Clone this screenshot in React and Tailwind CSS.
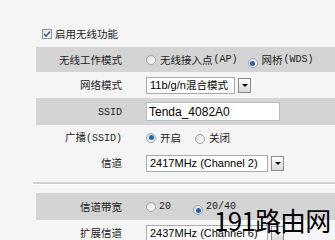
import React from "react"

const cjk = { fontFamily: '"Noto Sans CJK SC", "Liberation Sans", sans-serif' }
const latin = { fontFamily: '"Liberation Sans", Arial, sans-serif' }
const mono = { fontFamily: '"Liberation Mono", "Noto Sans CJK SC", monospace' }

// small XP-style radio button
const Radio = ({ checked }) => (
  <span className="inline-flex items-center justify-center w-[10px] h-[10px] rounded-full border border-[#9aa3ad] bg-gradient-to-br from-[#dcdcdc] to-white shrink-0">
    {checked && <span className="w-[5px] h-[5px] rounded-full bg-[#2a5fb0]" />}
  </span>
)

const Arrow = () => (
  <div className="w-[13px] h-[15px] border border-[#8a8a8a] bg-gradient-to-b from-white to-[#d8d8d8] flex items-center justify-center">
    <span className="w-0 h-0 border-l-[3px] border-r-[3px] border-t-[3px] border-l-transparent border-r-transparent border-t-black" />
  </div>
)

const Select = ({ value, width }) => (
  <div className="flex items-center gap-[3px]">
    <div
      className={`h-[17px] border border-[#a5acb5] bg-white flex items-center px-[3px] text-[11px] text-black whitespace-nowrap ${width}`}
      style={latin}
    >
      {value}
    </div>
    <Arrow />
  </div>
)

const Row = ({ label, gray, h = "h-[26px]", children }) => (
  <div className={`flex items-center ${h} ${gray ? "bg-[#d4d4d4]" : ""}`}>
    <div className="w-[86px] text-right text-[10.5px] text-[#222] whitespace-nowrap" style={cjk}>
      {label}
    </div>
    <div className="pl-[24px] flex items-center whitespace-nowrap">{children}</div>
  </div>
)

export default function App() {
  return (
    <div className="relative w-[335px] h-[240px] overflow-hidden bg-[#f5f5f5]">
      <div className="pl-[36px]">
        <div className="h-[47px] flex items-end pb-[7px] pl-[6px] gap-[3px]">
          <span className="mb-[1px] w-[10px] h-[10px] border border-[#8a95a3] bg-gradient-to-br from-[#e2e2e2] to-white flex items-center justify-center">
            <svg width="8" height="8" viewBox="0 0 8 8">
              <path d="M1 4 L3 6.2 L7 1.5" fill="none" stroke="#2a4fa0" strokeWidth="1.4" />
            </svg>
          </span>
          <span className="text-[10.5px] leading-[13px] text-[#222]" style={cjk}>启用无线功能</span>
        </div>

        <Row label="无线工作模式" gray h="h-[25px]">
          <Radio />
          <span className="ml-[4px] text-[10.5px] text-[#222]" style={cjk}>无线接入点</span>
          <span className="ml-[1px] text-[10px] text-[#222]" style={mono}>(AP)</span>
          <span className="ml-[10px]"><Radio checked /></span>
          <span className="ml-[4px] text-[10.5px] text-[#222]" style={cjk}>网桥</span>
          <span className="ml-[1px] text-[10px] text-[#222]" style={mono}>(WDS)</span>
        </Row>

        <Row label="网络模式">
          <div className="flex items-center gap-[3px]">
            <div className="h-[17px] w-[89px] border border-[#a5acb5] bg-white flex items-center px-[3px] text-[11px] text-black whitespace-nowrap">
              <span style={latin}>11b/g/n</span>
              <span className="text-[10.5px]" style={cjk}>混合模式</span>
            </div>
            <Arrow />
          </div>
        </Row>

        <Row label={<span style={mono} className="text-[10px]">SSID</span>} gray h="h-[27px]">
          <div className="h-[19px] w-[134px] border border-[#b5bcc5] bg-white flex items-center px-[2px] text-[12px] text-black" style={latin}>
            Tenda_4082A0
          </div>
        </Row>

        <Row label={<><span>广播</span><span style={mono} className="text-[10px]">(SSID)</span></>} h="h-[25px]">
          <Radio checked />
          <span className="ml-[4px] text-[10.5px] text-[#222]" style={cjk}>开启</span>
          <span className="ml-[14px]"><Radio /></span>
          <span className="ml-[4px] text-[10.5px] text-[#222]" style={cjk}>关闭</span>
        </Row>

        <Row label="信道">
          <Select value="2417MHz (Channel 2)" width="w-[122px]" />
        </Row>

        <div className="pt-[6px] pb-[8px] -ml-[3px]">
          <div className="h-[3px] bg-[#cfcfcf] border-b border-white" />
        </div>

        <Row label="信道带宽" gray h="h-[27px]">
          <Radio />
          <span className="ml-[3px] text-[10px] text-[#222]" style={mono}>20</span>
          <span className="ml-[22px]"><Radio checked /></span>
          <span className="ml-[3px] text-[10px] text-[#222]" style={mono}>20/40</span>
        </Row>

        <Row label="扩展信道">
          <Select value="2437MHz (Channel 6)" width="w-[122px]" />
        </Row>
      </div>

      <div className="absolute left-[214px] top-[207px] text-[26px] leading-none text-black whitespace-nowrap tracking-[-0.8px]" style={cjk}>
        191路由网
      </div>
    </div>
  )
}
